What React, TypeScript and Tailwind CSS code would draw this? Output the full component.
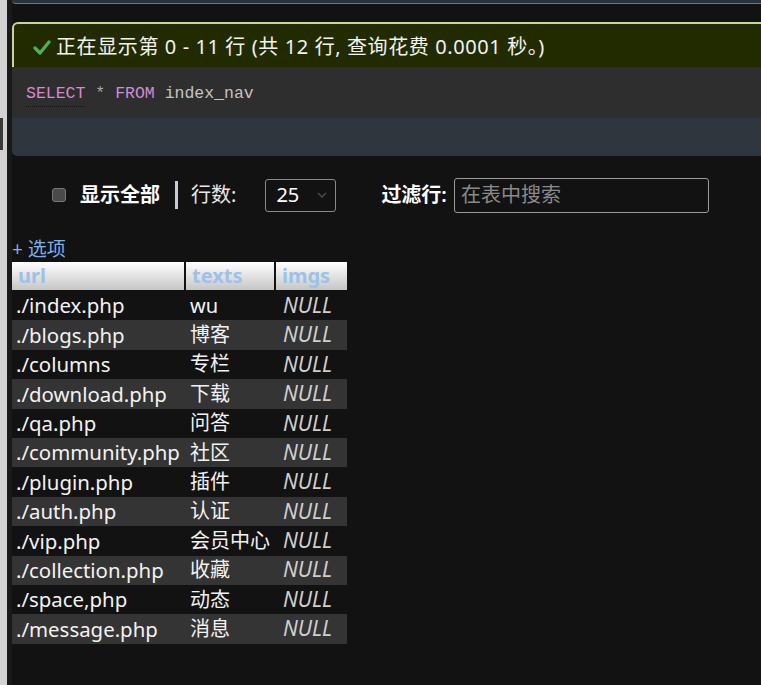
import React from 'react';

const rows: [string, string][] = [
  ['./index.php', 'wu'],
  ['./blogs.php', '博客'],
  ['./columns', '专栏'],
  ['./download.php', '下载'],
  ['./qa.php', '问答'],
  ['./community.php', '社区'],
  ['./plugin.php', '插件'],
  ['./auth.php', '认证'],
  ['./vip.php', '会员中心'],
  ['./collection.php', '收藏'],
  ['./space,php', '动态'],
  ['./message.php', '消息'],
];

const font = { fontFamily: '"Noto Sans", "Noto Sans CJK SC", sans-serif' };

export default function App() {
  return (
    <div
      className="flex h-[685px] w-full overflow-hidden bg-[#121212] text-[20px] text-[#f2f2f2]"
      style={font}
    >
      {/* left page chrome */}
      <div className="w-[7px] shrink-0 bg-[#d2d2d2] pt-[118px]">
        <div className="h-[32px] w-[3px] bg-[#3a3a3a]" />
      </div>
      <div className="w-[5px] shrink-0 bg-[#191919]" />

      <div className="flex min-w-0 flex-1 flex-col">
        <div className="h-[4px] rounded-bl-[4px] border-b border-[#6a7b87] bg-[#27323b]" />

        {/* result panel */}
        <div className="mt-[18px] flex h-[45px] items-center rounded-tl-[6px] border-l-2 border-t-2 border-[#c8d69d] bg-[#222b00] pl-[19px] pt-[3px]">
          <svg width="18" height="15" viewBox="0 0 18 15" className="mr-[5px]">
            <path d="M2 8 L7 13 L16 2" fill="none" stroke="#4fb14f" strokeWidth="3.2" strokeLinecap="round" strokeLinejoin="round" />
          </svg>
          <span className="whitespace-nowrap leading-none tracking-[0.6px]">正在显示第 0 - 11 行 (共 12 行, 查询花费 0.0001 秒。)</span>
        </div>
        <div className="flex h-[51px] items-center bg-[#2e2e2e] pl-[14px] pt-[4px] text-[16.5px]" style={{ fontFamily: '"Liberation Mono", monospace' }}>
          <span className="border-b border-dotted border-[#111] text-[#d68ad6]">SELECT</span>
          <span className="text-[#a8a8a8]">&nbsp;*&nbsp;</span>
          <span className="text-[#d68ad6]">FROM</span>
          <span className="text-[#c4c4c4]">&nbsp;index_nav</span>
        </div>
        <div className="h-[38px] rounded-bl-[5px] bg-[#30363d]" />

        {/* controls */}
        <div className="mt-[21px] flex h-[36px] items-center pl-[40px]">
          <div className="h-[14px] w-[14px] rounded-[3px] border border-[#777] bg-[#4a4a4a]" />
          <span className="ml-[14px] font-bold text-white">显示全部</span>
          <div className="ml-[15px] h-[28px] w-[3px] bg-[#c9ccd6]" />
          <span className="ml-[13px] text-[#e8e8e8]">行数:</span>
          <div className="ml-[29px] flex h-[33px] w-[71px] items-center justify-between rounded-[3px] border border-[#8a8a8a] pl-[10px] pr-[8px]">
            <span className="text-white">25</span>
            <svg width="10" height="6" viewBox="0 0 10 6">
              <path d="M1 1 L5 5 L9 1" fill="none" stroke="#4a4a4a" strokeWidth="1.5" />
            </svg>
          </div>
          <span className="ml-[45px] font-semibold text-white">过滤行:</span>
          <div className="ml-[7px] flex h-[35px] w-[255px] items-center rounded-[3px] border border-[#9a9a9a] pl-[6px] text-[#8a8a8a]">
            在表中搜索
          </div>
        </div>

        <div className="mt-[24px] h-[25px] text-[19px] leading-[25px] text-[#7fb0e8]">+&nbsp;选项</div>

        {/* table */}
        <div className="w-[335px]">
          <div className="flex h-[28px] gap-[2px]">
            {[
              ['url', 'w-[172px]'],
              ['texts', 'w-[88px]'],
              ['imgs', 'w-[71px]'],
            ].map(([t, w]) => (
              <div
                key={t}
                className={`${w} flex items-center bg-gradient-to-b from-white to-[#c6c6c6] pl-[6px] text-[20px] font-bold text-[#9cc2ea]`}
              >
                {t}
              </div>
            ))}
          </div>
          <div className="mt-[1px]">
            {rows.map(([url, text], i) => (
              <div key={url} className={`flex h-[29.4px] items-center ${i % 2 === 1 ? 'bg-[#343434]' : ''}`}>
                <div className="w-[174px] whitespace-nowrap pl-[4px] text-[20.4px]">{url}</div>
                <div className="w-[90px] whitespace-nowrap pl-[4px]">{text}</div>
                <div className="w-[71px] pl-[7px] text-[21px] italic text-[#cfcfcf]">NULL</div>
              </div>
            ))}
          </div>
        </div>
      </div>
    </div>
  );
}
